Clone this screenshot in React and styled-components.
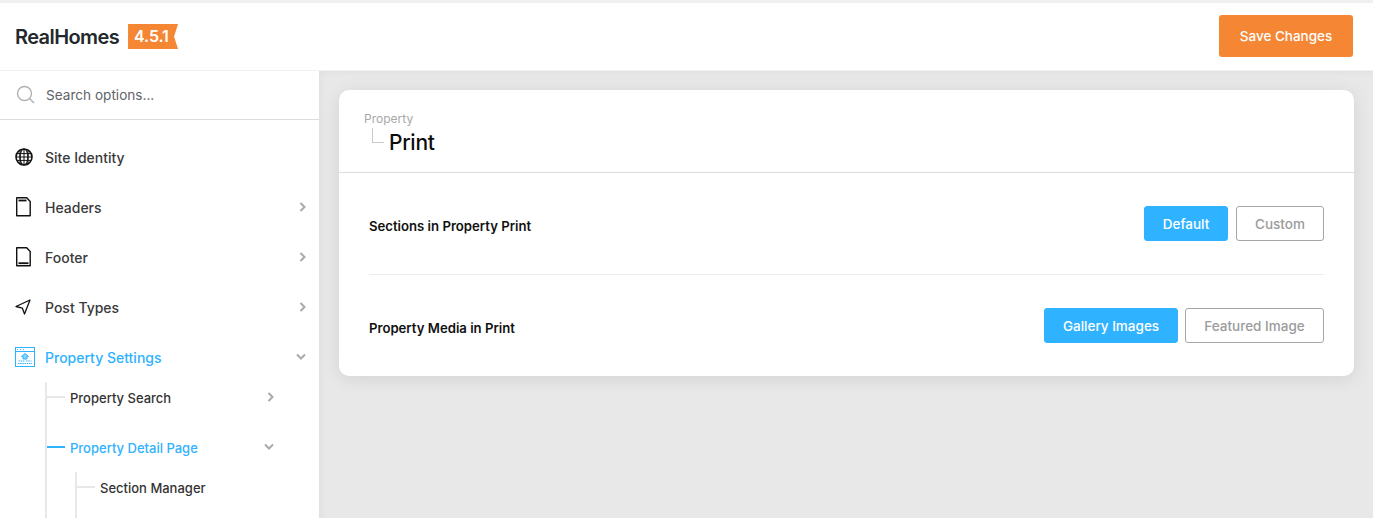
import React from 'react';
import styled, { createGlobalStyle } from 'styled-components';

const GlobalStyle = createGlobalStyle`
  html, body {
    margin: 0;
    padding: 0;
    height: 100%;
    overflow: hidden;
    background: #e8e8e8;
    font-family: Inter, "Liberation Sans", sans-serif;
  }
  * { box-sizing: border-box; }
`;

const Page = styled.div`
  height: 518px;
  display: flex;
  flex-direction: column;
  overflow: hidden;
  border-top: 3px solid #f0f0f0;
`;

const TopBar = styled.header`
  height: 67px;
  flex: none;
  background: #fff;
  display: flex;
  align-items: center;
  justify-content: space-between;
  padding: 0 20px 2px 15px;
  box-shadow: 0 1px 0 #f2f2f2;
  position: relative;
`;

const Brand = styled.div`
  display: flex;
  align-items: center;
  gap: 9px;
  margin-top: 2px;
`;

const BrandName = styled.span`
  font-size: 20px;
  font-weight: 600;
  letter-spacing: -0.6px;
  color: #23282d;
`;

const Version = styled.span`
  width: 50px;
  height: 25px;
  background: #f58634;
  color: #fff;
  font-size: 16px;
  font-weight: 600;
  line-height: 25px;
  padding-left: 6px;
  letter-spacing: -0.1px;
  clip-path: polygon(0 0, 100% 0, 92% 50%, 100% 100%, 0 100%);
`;

const SaveButton = styled.button`
  width: 134px;
  height: 42px;
  border: 0;
  border-radius: 3px;
  background: #f58634;
  color: #fff;
  font: 500 13.5px Inter, "Liberation Sans", sans-serif;
`;

const Body = styled.div`
  flex: 1;
  min-height: 0;
  display: flex;
`;

const Sidebar = styled.aside`
  width: 319px;
  flex: none;
  background: #fff;
  overflow: hidden;
`;

const SearchBar = styled.div`
  height: 50px;
  display: flex;
  align-items: center;
  gap: 11px;
  padding-left: 16px;
  border-bottom: 1px solid #dcdcdc;
  color: #b0b0b0;
`;

const SearchText = styled.span`
  font-size: 13.6px;
  color: #5f6368;
`;

const Menu = styled.nav`
  padding-top: 12px;
`;

const MenuItem = styled.div`
  height: 50px;
  display: flex;
  align-items: center;
  padding: 0 13px 0 15px;
  font-size: 14px;
  font-weight: 500;
  color: ${({ $active }) => ($active ? '#2fb2ff' : '#3a3a3a')};
`;

const IconSlot = styled.span`
  width: 30px;
  flex: none;
  display: flex;
  align-items: center;
  color: #111;
`;

const Label = styled.span`
  flex: 1;
`;

const SubLabel = styled(Label)`
  margin-top: 2px;
`;

const Arrow = styled.span`
  display: flex;
  color: #a9a9a9;
  margin-top: ${({ $down }) => ($down ? '-2px' : '-1px')};
`;

const SubList = styled.div`
  margin-left: ${({ $level }) => ($level === 2 ? '28px' : '45px')};
  margin-top: ${({ $level }) => ($level === 2 ? '-10px' : '0')};
  border-left: 2px solid #e8e8e8;
  padding-bottom: 40px;
`;

const SubItem = styled.div`
  height: 30px;
  margin-bottom: 20px;
  display: flex;
  align-items: center;
  padding-right: ${({ $level }) => ($level === 2 ? '0' : '45px')};
  font-size: 13px;
  font-weight: 500;
  color: ${({ $active }) => ($active ? '#2fb2ff' : '#333')};
`;

const Connector = styled.span`
  width: 18px;
  height: 2px;
  margin-right: 5px;
  flex: none;
  background: ${({ $active }) => ($active ? '#2fb2ff' : '#e8e8e8')};
`;

const Main = styled.main`
  flex: 1;
  min-width: 0;
  padding: 20px 19px 0 20px;
  background: #e8e8e8;
  box-shadow: inset 8px 8px 10px -8px rgba(0, 0, 0, 0.06);
`;

const Card = styled.section`
  background: #fff;
  border-radius: 10px;
  box-shadow: 0 3px 18px rgba(0, 0, 0, 0.09);
`;

const CardHead = styled.div`
  height: 83px;
  padding: 22px 0 0 25px;
  border-bottom: 1px solid #dcdcdc;
`;

const Crumb = styled.div`
  font-size: 12px;
  line-height: 14px;
  color: #a8a8a8;
`;

const TitleRow = styled.div`
  display: flex;
  align-items: flex-start;
  margin-top: 2px;
`;

const Elbow = styled.span`
  width: 12px;
  height: 15px;
  margin: 0 5px 0 8px;
  border-left: 1px solid #c8c8c8;
  border-bottom: 1px solid #c8c8c8;
`;

const Title = styled.h1`
  margin: 3px 0 0;
  font-size: 21px;
  line-height: 24px;
  font-weight: 500;
  letter-spacing: -0.25px;
  color: #0c0c0c;
`;

const Fields = styled.div`
  padding: 0 30px;
`;

const Field = styled.div`
  height: ${({ $last }) => ($last ? '101px' : '102px')};
  display: flex;
  align-items: center;
  justify-content: space-between;
  border-bottom: ${({ $last }) => ($last ? '0' : '1px solid #ececec')};
`;

const FieldLabel = styled.span`
  font-size: 13.15px;
  font-weight: 600;
  color: #111;
  margin-top: 5px;
`;

const Choices = styled.div`
  display: flex;
  gap: ${({ $last }) => ($last ? '7px' : '8px')};
  margin-top: ${({ $last }) => ($last ? '0' : '-1px')};
`;

const Choice = styled.button`
  height: 35px;
  width: ${({ $w }) => $w}px;
  padding: 1px 0 0;
  border-radius: 3px;
  border: 1px solid ${({ $on }) => ($on ? '#2fb2ff' : '#a6a6a6')};
  background: ${({ $on }) => ($on ? '#2fb2ff' : '#fff')};
  color: ${({ $on }) => ($on ? '#fff' : '#9b9b9b')};
  font: 500 13.5px Inter, "Liberation Sans", sans-serif;
`;

const ChevronRight = () => (
  <svg width="7" height="10" viewBox="0 0 7 10" fill="none" stroke="currentColor" strokeWidth="2">
    <path d="M1.5 1 5.5 5l-4 4" />
  </svg>
);

const ChevronDown = () => (
  <svg width="10" height="7" viewBox="0 0 10 7" fill="none" stroke="currentColor" strokeWidth="2">
    <path d="M1 1.5 5 5.5l4-4" />
  </svg>
);

const SearchIcon = () => (
  <svg width="19" height="19" viewBox="0 0 19 19" fill="none" stroke="currentColor" strokeWidth="1.4">
    <circle cx="8.5" cy="8.5" r="7" />
    <path d="m13.5 13.5 4.5 4.5" />
  </svg>
);

const GlobeIcon = () => (
  <svg width="18" height="18" viewBox="0 0 18 18" fill="none" stroke="currentColor" strokeWidth="1.2">
    <circle cx="9" cy="9" r="8" strokeWidth="1.6" />
    <ellipse cx="9" cy="9" rx="4" ry="8" />
    <path d="M9 1v16M1 9h16M2 5.6h14M2 12.4h14M5 1.5v15M13 1.5v15" strokeWidth="1" />
  </svg>
);

const HeaderIcon = () => (
  <svg width="16" height="20" viewBox="0 0 16 20" fill="none" stroke="currentColor" strokeWidth="1.4">
    <path d="M1.7.8h10l3.5 3.7v14.2H1.7z" strokeLinejoin="round" />
    <path d="M3.5 3.5h8" strokeWidth="1.8" />
  </svg>
);

const FooterIcon = () => (
  <svg width="16" height="20" viewBox="0 0 16 20" fill="none" stroke="currentColor" strokeWidth="1.4">
    <path d="M1.7.8h10l3.5 3.7v14.2H1.7z" strokeLinejoin="round" />
    <path d="M3.5 16.2h10" strokeWidth="1.8" />
  </svg>
);

const SendIcon = () => (
  <svg width="16" height="16" viewBox="0 0 16 16" fill="none" stroke="currentColor" strokeWidth="1.3" strokeLinejoin="round">
    <path d="M15 1 1 7.5l6.3 1.6L9.5 15z" />
  </svg>
);

const PropertyIcon = () => (
  <svg width="20" height="20" viewBox="0 0 20 20" fill="none" stroke="#2fb2ff" strokeWidth="1">
    <rect x="0.5" y="0.5" width="19" height="19" />
    <path d="M.5 4.5h19" />
    <path d="M2 2.5h1.5M5 2.5h1.5M8 2.5h1.5" strokeDasharray="1 1" />
    <path d="M10 6.5 6.5 9.5H8v2.5h4V9.5h1.5z" fill="#2fb2ff" fillOpacity="0.55" />
    <path d="M3.5 14h6M11 14h5.5M3 16.5h14" strokeDasharray="1.5 0.7" />
  </svg>
);

const Option = ({ on, w, children }) => (
  <Choice type="button" $on={on} $w={w}>{children}</Choice>
);

const topItems = [
  { label: 'Site Identity', icon: <GlobeIcon /> },
  { label: 'Headers', icon: <HeaderIcon />, more: true },
  { label: 'Footer', icon: <FooterIcon />, more: true },
  { label: 'Post Types', icon: <SendIcon />, more: true },
];

const App = () => (
  <>
    <GlobalStyle />
    <Page>
      <TopBar>
        <Brand>
          <BrandName>RealHomes</BrandName>
          <Version>4.5.1</Version>
        </Brand>
        <SaveButton type="button">Save Changes</SaveButton>
      </TopBar>
      <Body>
        <Sidebar>
          <SearchBar>
            <SearchIcon />
            <SearchText>Search options...</SearchText>
          </SearchBar>
          <Menu>
            {topItems.map((item) => (
              <MenuItem key={item.label}>
                <IconSlot>{item.icon}</IconSlot>
                <Label>{item.label}</Label>
                {item.more && <Arrow><ChevronRight /></Arrow>}
              </MenuItem>
            ))}
            <MenuItem $active>
              <IconSlot><PropertyIcon /></IconSlot>
              <Label>Property Settings</Label>
              <Arrow $down><ChevronDown /></Arrow>
            </MenuItem>
            <SubList>
              <SubItem>
                <Connector />
                <SubLabel>Property Search</SubLabel>
                <Arrow><ChevronRight /></Arrow>
              </SubItem>
              <SubItem $active>
                <Connector $active />
                <SubLabel>Property Detail Page</SubLabel>
                <Arrow $down><ChevronDown /></Arrow>
              </SubItem>
              <SubList $level={2}>
                <SubItem $level={2}>
                  <Connector />
                  <SubLabel>Section Manager</SubLabel>
                </SubItem>
              </SubList>
            </SubList>
          </Menu>
        </Sidebar>
        <Main>
          <Card>
            <CardHead>
              <Crumb>Property</Crumb>
              <TitleRow>
                <Elbow />
                <Title>Print</Title>
              </TitleRow>
            </CardHead>
            <Fields>
              <Field>
                <FieldLabel>Sections in Property Print</FieldLabel>
                <Choices>
                  <Option on w={84}>Default</Option>
                  <Option w={88}>Custom</Option>
                </Choices>
              </Field>
              <Field $last>
                <FieldLabel>Property Media in Print</FieldLabel>
                <Choices $last>
                  <Option on w={134}>Gallery Images</Option>
                  <Option w={139}>Featured Image</Option>
                </Choices>
              </Field>
            </Fields>
          </Card>
        </Main>
      </Body>
    </Page>
  </>
);

export default App;
